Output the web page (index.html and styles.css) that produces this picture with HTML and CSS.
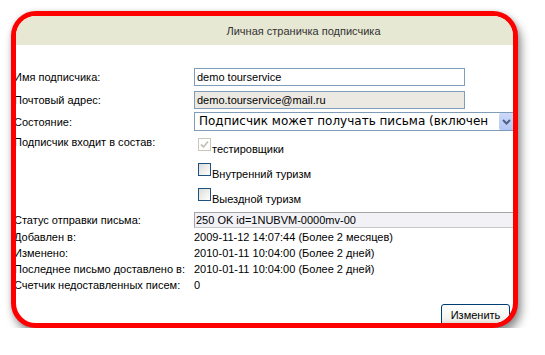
FILE: index.html
```html
<!DOCTYPE html>
<html lang="ru">
<head>
<meta charset="utf-8">
<title>Личная страничка подписчика</title>
<link rel="stylesheet" href="styles.css">
</head>
<body>
<div class="frame">
  <div class="head"><span>Личная страничка подписчика</span></div>
  <div class="content">
    <div class="row r1">
      <div class="lbl">Имя подписчика:</div>
      <div class="val"><input class="input" type="text" value="demo tourservice"></div>
    </div>
    <div class="row r2">
      <div class="lbl">Почтовый адрес:</div>
      <div class="val"><input class="input disabled" type="text" value="demo.tourservice@mail.ru" readonly></div>
    </div>
    <div class="row r3">
      <div class="lbl">Состояние:</div>
      <div class="val">
        <div class="select">
          <span class="sel-text">Подписчик может получать письма (включен</span>
          <span class="arrow"><svg width="15" height="17" viewBox="0 0 15 17"><path d="M4 7 L7.5 10.5 L11 7" fill="none" stroke="#4D6185" stroke-width="2"/></svg></span>
        </div>
      </div>
    </div>
    <div class="row r4">
      <div class="lbl">Подписчик входит в состав:</div>
      <div class="val checks">
        <div class="chk">
          <span class="cb cb-dis"><svg width="11" height="11" viewBox="0 0 11 11"><path d="M2 5.5 L4.5 8 L9 2.5" fill="none" stroke="#C5C3B4" stroke-width="1.8"/></svg></span>
          <span class="chk-text">тестировщики</span>
        </div>
        <div class="chk">
          <span class="cb"></span>
          <span class="chk-text">Внутренний туризм</span>
        </div>
        <div class="chk">
          <span class="cb"></span>
          <span class="chk-text">Выездной туризм</span>
        </div>
      </div>
    </div>
    <div class="row r5">
      <div class="lbl">Статус отправки письма:</div>
      <div class="val"><div class="status">250 OK id=1NUBVM-0000mv-00</div></div>
    </div>
    <div class="row line first">
      <div class="lbl">Добавлен в:</div>
      <div class="val">2009-11-12 14:07:44 (Более 2 месяцев)</div>
    </div>
    <div class="row line">
      <div class="lbl">Изменено:</div>
      <div class="val">2010-01-11 10:04:00 (Более 2 дней)</div>
    </div>
    <div class="row line">
      <div class="lbl">Последнее письмо доставлено в:</div>
      <div class="val">2010-01-11 10:04:00 (Более 2 дней)</div>
    </div>
    <div class="row line">
      <div class="lbl">Счетчик недоставленных писем:</div>
      <div class="val">0</div>
    </div>
    <div class="actions">
      <button class="btn" type="button">Изменить</button>
    </div>
  </div>
</div>
</body>
</html>
```
FILE: styles.css
```css
html, body {
  margin: 0;
  padding: 0;
  background: #ffffff;
}

body {
  font-family: "Liberation Sans", Arial, sans-serif;
  font-size: 11px;
  color: #000000;
}

.frame {
  margin: 11px 0 0 11px;
  width: 507px;
  height: 317px;
  box-sizing: border-box;
  border: 5px solid #ff0000;
  border-radius: 25px;
  overflow: hidden;
  background: #ffffff;
  box-shadow: 3px 6px 10px rgba(0, 0, 0, 0.45), 0 0 4px rgba(0, 0, 0, 0.12);
}

.head {
  height: 29px;
  background: #e6e8d3;
  color: #333333;
  display: flex;
  align-items: center;
  justify-content: center;
  padding-left: 78px;
  font-size: 11px;
}

.content {
  margin-left: -2px;
}

.row {
  display: flex;
  align-items: center;
}

.lbl {
  width: 180px;
  flex: none;
  white-space: nowrap;
}

.val {
  white-space: nowrap;
}

.r1 {
  margin-top: 23px;
  height: 18px;
}

.r2 {
  margin-top: 5px;
  height: 18px;
}

.r3 {
  margin-top: 3px;
  height: 19px;
}

.r4 {
  margin-top: 4px;
  align-items: flex-start;
}

.r4 .lbl {
  line-height: 14px;
}

.input {
  display: block;
  width: 271px;
  height: 18px;
  box-sizing: border-box;
  margin: 0;
  border: 1px solid #7f9db9;
  padding: 0 2px;
  font-family: "Liberation Sans", Arial, sans-serif;
  font-size: 11px;
  color: #000000;
  background: #ffffff;
  outline: none;
}

.input.disabled {
  background: #ebe9e1;
}

.select {
  width: 321px;
  height: 19px;
  box-sizing: border-box;
  border: 1px solid #7f9db9;
  background: #ffffff;
  display: flex;
  align-items: center;
}

.sel-text {
  flex: 1;
  white-space: nowrap;
  padding-left: 4px;
  font-family: "DejaVu Sans", sans-serif;
  font-size: 12px;
  line-height: 17px;
}

.arrow {
  flex: none;
  width: 15px;
  height: 17px;
  border-radius: 2px;
  background: linear-gradient(#cdd9fb, #b3c6f4);
  display: flex;
}

.checks {
  display: flex;
  flex-direction: column;
  gap: 12px;
  padding-top: 3px;
}

.chk {
  height: 13px;
  display: flex;
  align-items: flex-start;
  padding-left: 4px;
}

.cb {
  flex: none;
  width: 13px;
  height: 13px;
  box-sizing: border-box;
  border: 1px solid #1c5180;
  background: linear-gradient(135deg, #dcdcd6, #ffffff);
  display: flex;
}

.cb-dis {
  border-color: #cac8bb;
  background: #ffffff;
}

.chk-text {
  margin-left: 1px;
  margin-top: 4px;
  line-height: 14px;
}

.r5 {
  margin-top: 11px;
  height: 16px;
}

.status {
  width: 330px;
  height: 16px;
  box-sizing: border-box;
  border: 1px solid #a5a5a8;
  border-bottom-color: #c8c8cc;
  background: #f1f1f6;
  padding-left: 1px;
  line-height: 14px;
}

.line {
  height: 16px;
}

.line.first {
  margin-top: 1px;
}

.actions {
  display: flex;
  justify-content: flex-end;
  padding-right: 3px;
  margin-top: 11px;
}

.btn {
  width: 69px;
  height: 22px;
  box-sizing: border-box;
  margin: 0;
  padding: 0;
  border: 1px solid #003c74;
  border-radius: 3px;
  background: linear-gradient(#ffffff, #f3f3ef 70%, #d8d4c9);
  font-family: "Liberation Sans", Arial, sans-serif;
  font-size: 11px;
  color: #000000;
}
```
